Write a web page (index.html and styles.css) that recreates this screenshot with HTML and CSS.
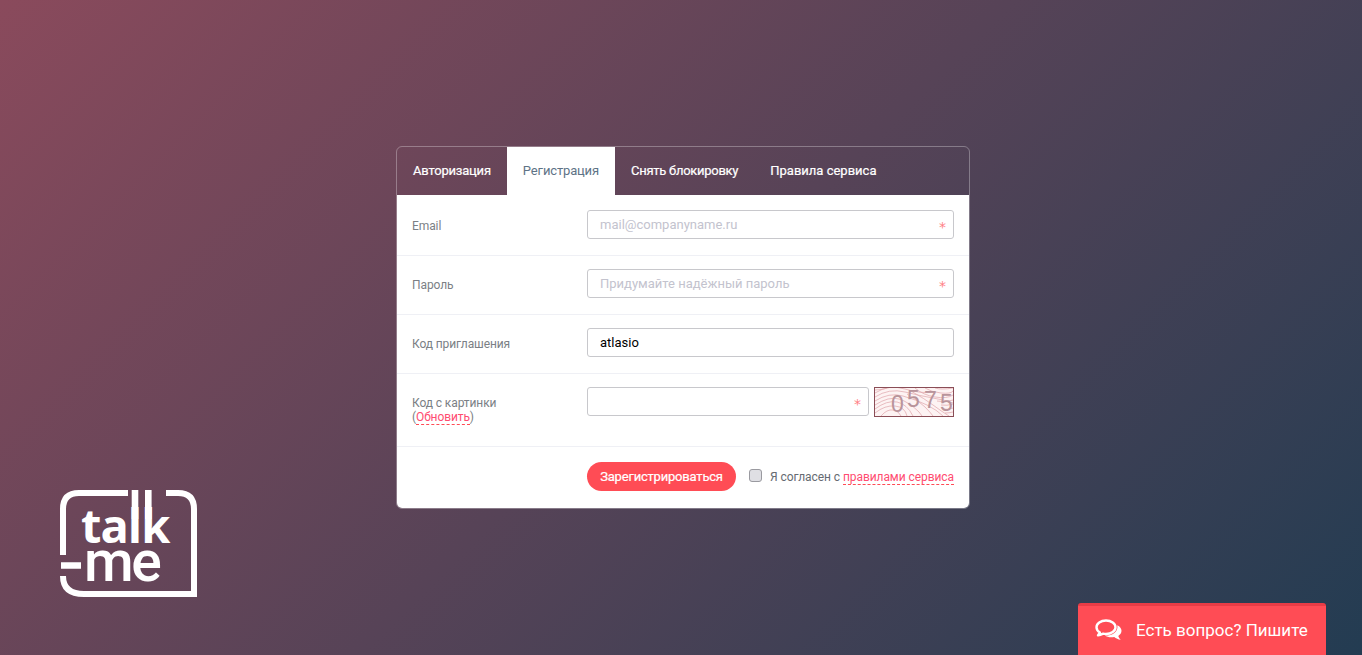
FILE: index.html
```html
<!DOCTYPE html>
<html lang="ru">
<head>
<meta charset="utf-8">
<title>Talk-Me</title>
<link rel="stylesheet" href="styles.css">
</head>
<body>
<div class="logo">
  <svg class="logo-frame" width="138" height="108" viewBox="0 0 138 108">
    <path d="M3 66V20Q3 4 19 4H68M106 4H118Q134 4 134 20V105H24Q3 105 3 87" fill="none" stroke="#fff" stroke-width="6"/>
    <path d="M1 76.500H21" fill="none" stroke="#fff" stroke-width="6.500"/>
    <path d="M75 1V30M88.300 1V30" fill="none" stroke="#fff" stroke-width="6.600"/>
  </svg>
  <span class="logo-talk">talk</span>
  <span class="logo-me">me</span>
</div>

<main class="card">
  <nav class="tabs">
    <a class="tab">Авторизация</a>
    <a class="tab tab-active">Регистрация</a>
    <a class="tab tab-tight">Снять блокировку</a>
    <a class="tab tab-wide">Правила сервиса</a>
  </nav>
  <form class="form">
    <div class="row row-first">
      <label class="label">Email</label>
      <div class="field">
        <input class="input" placeholder="mail@companyname.ru">
        <span class="req">*</span>
      </div>
    </div>
    <div class="row">
      <label class="label">Пароль</label>
      <div class="field">
        <input class="input" placeholder="Придумайте надёжный пароль">
        <span class="req">*</span>
      </div>
    </div>
    <div class="row">
      <label class="label">Код приглашения</label>
      <div class="field">
        <input class="input" value="atlasio">
      </div>
    </div>
    <div class="row row-captcha">
      <label class="label label-captcha">Код с картинки<br>(<a class="dash">Обновить</a>)</label>
      <div class="captcha-wrap">
        <div class="field field-grow">
          <input class="input">
          <span class="req">*</span>
        </div>
        <div class="captcha">
          <svg class="captcha-lines" width="78" height="28" viewBox="0 0 78 28" fill="none" stroke="#dfa5ab" stroke-width=".7">
            <path d="M0 5Q14 -4 30 1T60 4"/>
            <path d="M0 9Q14 0 30 4T58 10T78 15"/>
            <path d="M0 13Q14 4 28 8T52 17T68 28"/>
            <path d="M0 17Q14 8 24 11T44 24L47 28"/>
            <path d="M0 21Q12 12 22 14T38 28"/>
            <path d="M0 25Q10 17 20 18T32 28"/>
            <path d="M6 28Q12 21 18 22T26 28"/>
            <path d="M40 0Q48 7 60 9T78 7"/>
            <path d="M50 0Q56 4 66 5T78 3"/>
            <path d="M60 0Q66 2 78 0"/>
            <path d="M36 3Q50 11 58 17T74 28"/>
            <path d="M32 6Q44 13 50 19T58 28"/>
            <path d="M62 13Q70 15 78 12"/>
            <path d="M66 17Q72 18 78 16"/>
            <path d="M68 21Q72 22 78 20"/>
            <path d="M70 25Q74 25 78 24"/>
            <path d="M12 0Q6 2 0 2"/>
          </svg>
          <span class="digit d1">0</span><span class="digit d2">5</span><span class="digit d3">7</span><span class="digit d4">5</span>
        </div>
      </div>
    </div>
    <div class="row row-submit">
      <button class="btn" type="button">Зарегистрироваться</button>
      <span class="check"></span>
      <span class="agree">Я согласен с <a class="dash">правилами сервиса</a></span>
    </div>
  </form>
</main>

<a class="chat">
  <svg class="chat-icon" width="27" height="22" viewBox="0 0 27 22">
    <path d="M11 1.500C5.700 1.500 1.500 4.600 1.500 8.300C1.500 10.400 2.800 12.200 4.900 13.500C4.500 14.700 3.800 15.500 3 16.400C5.100 16.100 6.900 15.300 8.200 14.700C9.100 14.900 10 15 11 15C16.300 15 20.500 12 20.500 8.300C20.500 4.600 16.300 1.500 11 1.500Z" fill="none" stroke="#fff" stroke-width="2.400" stroke-linejoin="round"/>
    <path d="M22.300 6.200C25 7.500 26.500 9.500 26.500 11.800C26.500 13.900 25.200 15.700 23.300 16.900C23.700 18.400 24.600 19.500 25.800 20.800C23.200 20.400 21 19.400 19.200 18C18.300 18.200 17.300 18.300 16.300 18.300C13.800 18.300 11.500 17.600 9.800 16.500C16.500 16.800 23.600 13.500 22.300 6.200Z" fill="#fff"/>
  </svg>
  <span>Есть вопрос? Пишите</span>
</a>
</body>
</html>
```
FILE: styles.css
```css
* { box-sizing: border-box; }
html, body { height: 100%; margin: 0; }
body {
  display: flex;
  align-items: center;
  justify-content: center;
  padding-left: 4px;
  overflow: hidden;
  background: linear-gradient(135deg, #8a4a5c 0%, #233c52 100%);
  font-family: Roboto, "Liberation Sans", sans-serif;
  font-size: 13px;
}
.card {
  width: 574px;
  height: 363px;
  border: 1px solid rgba(255, 255, 255, .3);
  border-radius: 6px;
  overflow: hidden;
}
.tabs { display: flex; height: 48px; }
.tab {
  padding: 16px 16px 0;
  color: #fff;
  font-size: 13px;
  line-height: 16px;
  letter-spacing: -.2px;
  -webkit-text-stroke: .2px #fff;
}
.tab-tight { letter-spacing: -.27px; }
.tab-wide { letter-spacing: 0; }
.tab-active {
  background: #fff;
  color: #5e7386;
  letter-spacing: -.15px;
  -webkit-text-stroke: 0;
}
.form { background: #fff; height: 313px; display: flex; flex-direction: column; }
.row {
  display: grid;
  grid-template-columns: 175px 1fr;
  padding: 13px 15px 16px 15px;
  height: 59px;
  border-bottom: 1px solid #eff0f5;
}
.row-first { height: 61px; padding-top: 15px; }
.label { color: #7b7f85; font-size: 12px; line-height: 32px; letter-spacing: -.1px; }
.label-captcha { line-height: 14px; padding-top: 9px; }
.field { position: relative; height: 29px; }
.input {
  display: block;
  width: 100%;
  height: 29px;
  padding: 0 30px 1px 12px;
  border: 1px solid #c8c8cc;
  border-radius: 3px;
  outline: 0;
  font: 13px Roboto, "Liberation Sans", sans-serif;
  color: #000;
  background: #fff;
}
.input::placeholder { color: #c3c3ce; opacity: 1; }
.req {
  position: absolute;
  right: 8px;
  top: 7px;
  color: #ff8085;
  font: 14px/20px "DejaVu Sans", sans-serif;
}
.row-captcha { height: 73px; }
.captcha-wrap { display: flex; gap: 5px; }
.field-grow { flex: 1; }
.captcha {
  position: relative;
  width: 80px;
  height: 30px;
  border: 1px solid #8a4d56;
  background: #fdf3f3;
  overflow: hidden;
  flex: none;
}
.captcha-lines { position: absolute; left: 0; top: 0; }
.digit {
  position: absolute;
  color: #b8949b;
  font: 23px "Liberation Sans", sans-serif;
  line-height: 24px;
}
.d1 { left: 16px; top: 4px; }
.d2 { left: 32px; top: -1px; }
.d3 { left: 49px; top: 0; }
.d4 { left: 65px; top: 3px; }
.dash { color: #ff4c70; border-bottom: 1px dashed #ff4c55; }
.row-submit {
  display: flex;
  align-items: center;
  height: auto;
  flex: 1;
  padding: 15px 15px 17px 190px;
  border: 0;
}
.btn {
  flex: none;
  width: 149px;
  height: 29px;
  padding: 0;
  border: 0;
  border-radius: 15px;
  background: #ff4c55;
  color: #fff;
  font: 13px Roboto, "Liberation Sans", sans-serif;
  letter-spacing: -.2px;
  -webkit-text-stroke: .2px #fff;
}
.check {
  flex: none;
  width: 13px;
  height: 13px;
  margin: -3px 8px 0 13px;
  border: 1px solid #9a9aa0;
  border-radius: 3px;
  background: #dfdfe4;
}
.agree { color: #666b72; font-size: 12px; white-space: nowrap; letter-spacing: -.07px; }
.logo {
  position: absolute;
  left: 60px;
  top: 489px;
  width: 138px;
  height: 108px;
}
.logo-frame { position: absolute; left: 0; top: 0; }
.logo-talk, .logo-me {
  position: absolute;
  color: #fff;
}
.logo-talk {
  left: 21px;
  top: 18px;
  font: 700 47px/36px "Open Sans", sans-serif;
  letter-spacing: -1px;
}
.logo-me {
  left: 24px;
  top: 58px;
  font: 500 57px/30px Roboto, sans-serif;
  letter-spacing: -2.500px;
}
.chat {
  position: fixed;
  right: 36px;
  bottom: 0;
  display: flex;
  align-items: center;
  width: 248px;
  height: 52px;
  padding: 0 0 2px 17px;
  gap: 14px;
  border-top: 3px solid #e83c46;
  border-radius: 3px 3px 0 0;
  background: #ff4c55;
  color: #fff;
  font-size: 17px;
}
.chat-icon { flex: none; }
```
